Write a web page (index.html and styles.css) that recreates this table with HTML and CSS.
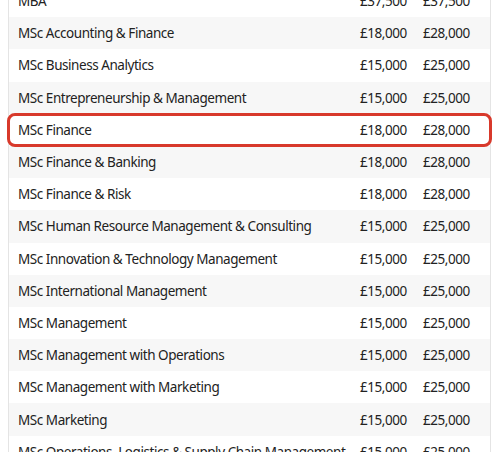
FILE: index.html
```html
<!DOCTYPE html>
<html lang="en">
<head>
<meta charset="utf-8">
<link rel="stylesheet" href="styles.css">
<title>Fees</title>
</head>
<body>
<div class="fees">
  <div class="row"><span class="name">MBA</span><span class="fee">£37,500</span><span class="fee">£37,500</span></div>
  <div class="row"><span class="name">MSc Accounting &amp; Finance</span><span class="fee">£18,000</span><span class="fee">£28,000</span></div>
  <div class="row"><span class="name">MSc Business Analytics</span><span class="fee">£15,000</span><span class="fee">£25,000</span></div>
  <div class="row"><span class="name">MSc Entrepreneurship &amp; Management</span><span class="fee">£15,000</span><span class="fee">£25,000</span></div>
  <div class="row highlight"><span class="name">MSc Finance</span><span class="fee">£18,000</span><span class="fee">£28,000</span></div>
  <div class="row"><span class="name">MSc Finance &amp; Banking</span><span class="fee">£18,000</span><span class="fee">£28,000</span></div>
  <div class="row"><span class="name">MSc Finance &amp; Risk</span><span class="fee">£18,000</span><span class="fee">£28,000</span></div>
  <div class="row"><span class="name">MSc Human Resource Management &amp; Consulting</span><span class="fee">£15,000</span><span class="fee">£25,000</span></div>
  <div class="row"><span class="name">MSc Innovation &amp; Technology Management</span><span class="fee">£15,000</span><span class="fee">£25,000</span></div>
  <div class="row"><span class="name">MSc International Management</span><span class="fee">£15,000</span><span class="fee">£25,000</span></div>
  <div class="row"><span class="name">MSc Management</span><span class="fee">£15,000</span><span class="fee">£25,000</span></div>
  <div class="row"><span class="name">MSc Management with Operations</span><span class="fee">£15,000</span><span class="fee">£25,000</span></div>
  <div class="row"><span class="name">MSc Management with Marketing</span><span class="fee">£15,000</span><span class="fee">£25,000</span></div>
  <div class="row"><span class="name">MSc Marketing</span><span class="fee">£15,000</span><span class="fee">£25,000</span></div>
  <div class="row"><span class="name">MSc Operations, Logistics &amp; Supply Chain Management</span><span class="fee">£15,000</span><span class="fee">£25,000</span></div>
</div>
</body>
</html>
```
FILE: styles.css
```css
html, body {
  margin: 0;
  padding: 0;
  background: #ffffff;
  overflow: hidden;
}
body {
  font-family: "Noto Sans", "Open Sans", sans-serif;
  font-size: 13.5px;
  letter-spacing: -0.45px;
  color: #222222;
}
.fees {
  margin: -15px 0 0 8px;
  width: 481px;
  border-left: 1px solid #e4e4e4;
  border-right: 1px solid #e4e4e4;
}
.row {
  display: grid;
  grid-template-columns: 1fr 63px 67px;
  align-items: center;
  height: 32.2px;
  white-space: nowrap;
}
.row:nth-child(even) {
  background: #f7f7f7;
}
.name {
  padding-left: 9px;
  overflow: hidden;
}
.highlight {
  outline: 3px solid #d8392b;
  outline-offset: -2px;
  border-radius: 7px;
  margin-left: -1px;
  margin-right: -1px;
  padding-left: 1px;
  padding-right: 1px;
}
```
